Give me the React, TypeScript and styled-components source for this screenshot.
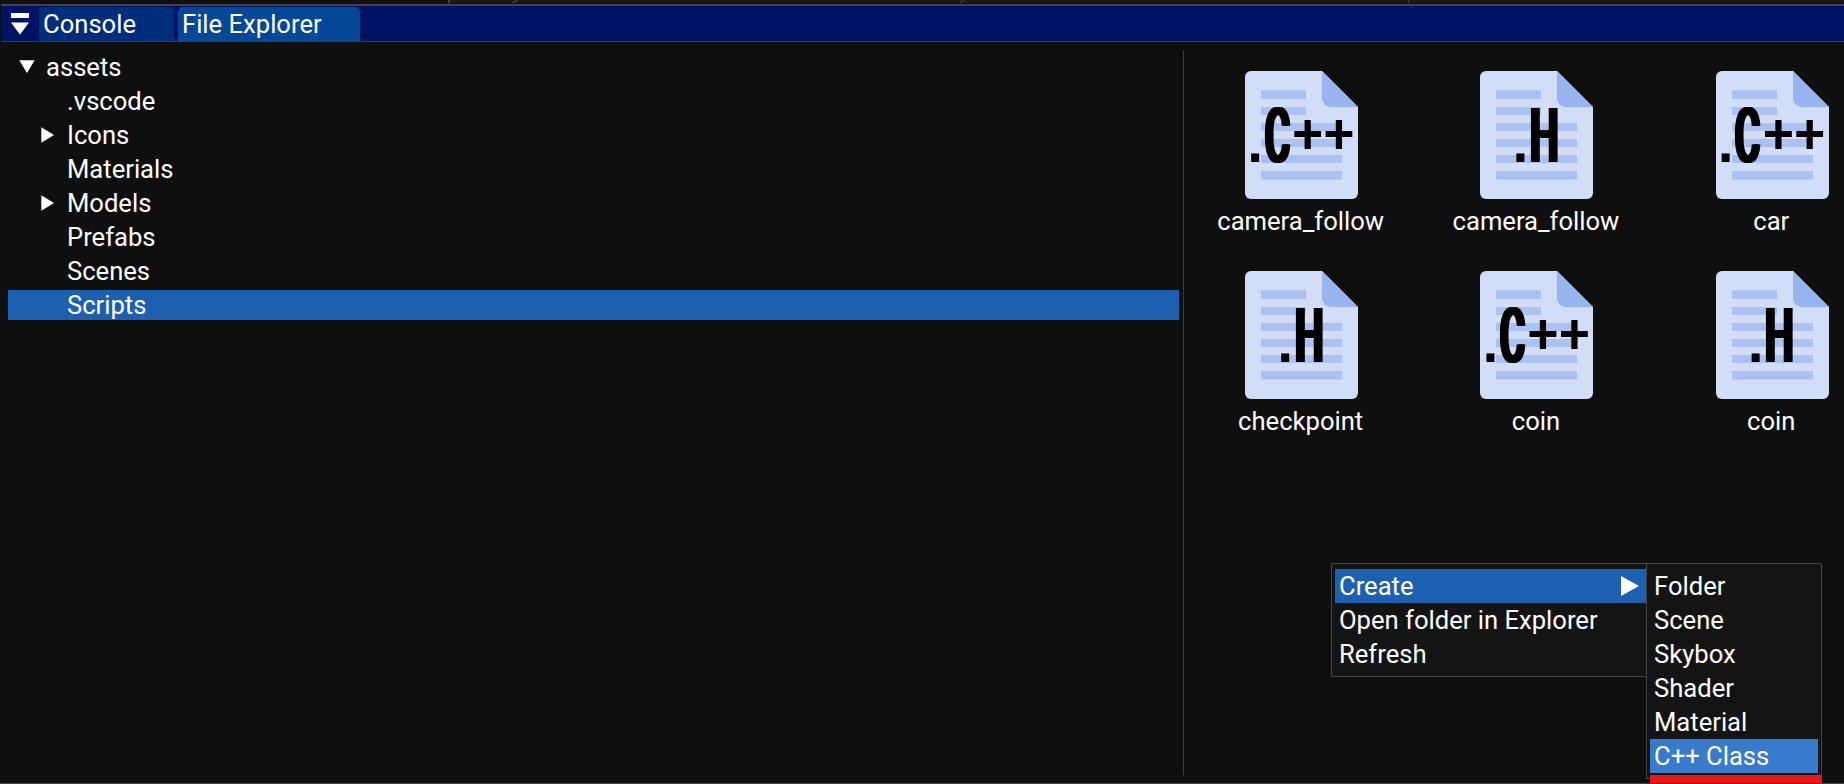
import React from "react";
import styled, { createGlobalStyle, css } from "styled-components";

const GlobalStyle = createGlobalStyle`
  html, body { margin: 0; padding: 0; background: #0f0f0f; overflow: hidden; }
  * { box-sizing: border-box; }
`;

const Window = styled.div`
  position: relative;
  display: flex;
  flex-direction: column;
  width: 1844px;
  height: 784px;
  overflow: hidden;
  background: #0f0f0f;
  color: #fff;
  font-family: Roboto, "Liberation Sans", sans-serif;
  font-size: 25.6px;
  line-height: 30px;
  white-space: nowrap;
`;

const UpperDock = styled.div`
  display: flex;
  height: 4px;
  padding-left: 448px;
`;

const UpperPanel = styled.div`
  flex: 1;
  height: 4px;
  border-left: 2px solid #424248;
  border-bottom: 1px solid #111;
  background: #1a1a1a;
`;

const UpperMarks = styled.svg`
  display: block;
  width: 1000px;
  height: 3px;
`;

const Splitter = styled.div`
  height: 2px;
  margin-left: 1px;
  background: #424248;
`;

const TabBar = styled.div`
  display: flex;
  align-items: flex-end;
  height: 36px;
  margin-left: 1px;
  padding-left: 10px;
  border-bottom: 1px solid #054a96;
  background: #001263;
`;

const DockMenuIcon = styled.svg`
  width: 18px;
  height: 35px;
  margin-right: 10px;
`;

const Tab = styled.div<{ $width: number; $active?: boolean }>`
  width: ${(p) => p.$width}px;
  height: 34px;
  margin-right: 4px;
  padding: 2px 0 0 4px;
  border-radius: 5px 5px 0 0;
  background: ${(p) => (p.$active ? "#054896" : "#002d7c")};
`;

const Body = styled.div`
  flex: 1;
  display: flex;
  padding: 8px 0 8px 8px;
  border-bottom: 1px solid #424248;
`;

const Tree = styled.div`
  display: flex;
  flex-direction: column;
  gap: 4px;
  width: 1171px;
  padding-top: 2px;
`;

const TreeRow = styled.div<{ $depth: number; $selected?: boolean }>`
  display: flex;
  align-items: center;
  height: 30px;
  padding-left: ${(p) => 11 + p.$depth * 21}px;
  ${(p) => p.$selected && css`background: #1e60b0;`}
`;

const TreeArrow = styled.svg`
  flex: none;
  width: 16px;
  height: 30px;
  margin-right: 11px;
`;

const Divider = styled.div`
  width: 1px;
  height: 725px;
  margin-left: 4px;
  background: #3d3d41;
`;

const FileGrid = styled.div`
  display: grid;
  grid-template-columns: repeat(3, 235.3px);
  grid-auto-rows: 200px;
  width: 660px;
  padding-top: 21px;
`;

const FileCell = styled.div`
  display: flex;
  flex-direction: column;
  align-items: center;
`;

const FileIcon = styled.div`
  position: relative;
  width: 113px;
  height: 128px;
`;

const FileLabel = styled.div`
  margin-top: 7px;
  padding-right: 2px;
`;

const Badge = styled.div<{ $indent: number }>`
  position: absolute;
  inset: 0;
  display: flex;
  align-items: flex-start;
  padding-left: ${(p) => p.$indent}px;
  color: #000;
  line-height: 1;
  font-weight: 500;
`;

const Dot = styled.span`
  flex: none;
  width: 17.6px;
  padding-top: 42.8px;
  font-family: "Liberation Sans", sans-serif;
  font-size: 57px;
  font-weight: 700;
`;

const Letter = styled.span<{ $stretch: number }>`
  flex: none;
  width: 27.8px;
  padding-top: 27px;
  font-size: 76px;
  transform: scaleX(${(p) => p.$stretch});
  transform-origin: 0 0;
  text-shadow: 4px 0 0 #000, -4px 0 0 #000, 2px 0 0 #000, -2px 0 0 #000;
`;

const Plus = styled.span`
  flex: none;
  width: 31.3px;
  padding-top: 36.2px;
  font-size: 55px;
`;

const Menu = styled.div<{ $x: number; $width: number; $height: number }>`
  position: absolute;
  left: ${(p) => p.$x}px;
  top: 563px;
  width: ${(p) => p.$width}px;
  height: ${(p) => p.$height}px;
  padding: 5px 3px 0;
  border: 1px solid #424248;
  background: #141414;
`;

const MenuItem = styled.div<{ $tone?: string }>`
  display: flex;
  align-items: center;
  justify-content: space-between;
  height: 34px;
  padding: 0 7px 0 4px;
  background: ${(p) => p.$tone || "transparent"};
`;

const SubmenuArrow = styled.svg`
  width: 18px;
  height: 20px;
`;

const DropMarker = styled.div`
  position: absolute;
  left: 1650px;
  top: 775px;
  width: 172px;
  height: 8px;
  background: #e51a1a;
`;

type Arrow = "open" | "closed" | "none";

const tree: { name: string; depth: number; arrow: Arrow; selected?: boolean }[] = [
  { name: "assets", depth: 0, arrow: "open" },
  { name: ".vscode", depth: 1, arrow: "none" },
  { name: "Icons", depth: 1, arrow: "closed" },
  { name: "Materials", depth: 1, arrow: "none" },
  { name: "Models", depth: 1, arrow: "closed" },
  { name: "Prefabs", depth: 1, arrow: "none" },
  { name: "Scenes", depth: 1, arrow: "none" },
  { name: "Scripts", depth: 1, arrow: "none", selected: true },
];

const files: { name: string; kind: "cpp" | "h" }[] = [
  { name: "camera_follow", kind: "cpp" },
  { name: "camera_follow", kind: "h" },
  { name: "car", kind: "cpp" },
  { name: "checkpoint", kind: "h" },
  { name: "coin", kind: "cpp" },
  { name: "coin", kind: "h" },
];

function FilePicture({ kind }: { kind: "cpp" | "h" }) {
  return (
    <FileIcon>
      <svg width="113" height="128" viewBox="0 0 113 128" display="block">
        <path d="M6 0H77L113 36V122a6 6 0 0 1-6 6H6a6 6 0 0 1-6-6V6a6 6 0 0 1 6-6Z" fill="#d2def8" />
        <path d="M77 0L113 36H86a9 9 0 0 1-9-9Z" fill="#98b4f0" />
        <path
          d="M16 19.3H61V28H16ZM16 36H61V44H16ZM16 52H97V60H16ZM16 68H97V76H16ZM16 84H97V92H16ZM16 100H97V108.5H16Z"
          fill="#abc1f1"
        />
      </svg>
      {kind === "cpp" ? (
        <Badge $indent={2}>
          <Dot>.</Dot>
          <Letter $stretch={0.5}>C</Letter>
          <Plus>+</Plus>
          <Plus>+</Plus>
        </Badge>
      ) : (
        <Badge $indent={32}>
          <Dot>.</Dot>
          <Letter $stretch={0.53}>H</Letter>
        </Badge>
      )}
    </FileIcon>
  );
}

export default function App() {
  return (
    <>
      <GlobalStyle />
      <Window>
        <UpperDock>
          <UpperPanel>
            <UpperMarks viewBox="0 0 1000 3" fill="none" stroke="#3a3a3a">
              <path d="M62 3L68 0M510 3L514 0" strokeWidth="1.5" />
              <path d="M958.5 0V3" />
            </UpperMarks>
          </UpperPanel>
        </UpperDock>
        <Splitter />
        <TabBar>
          <DockMenuIcon viewBox="0 0 18 35" fill="#fff">
            <path d="M0 7H18V12H0ZM0 16.5H18L9 28.5Z" />
          </DockMenuIcon>
          <Tab $width={135}>Console</Tab>
          <Tab $width={182} $active>File Explorer</Tab>
        </TabBar>
        <Body>
          <Tree>
            {tree.map((n) => (
              <TreeRow key={n.name} $depth={n.depth} $selected={n.selected}>
                <TreeArrow viewBox="0 0 16 30" fill="#fff">
                  {n.arrow === "open" && <path d="M0.3 8.3H15.7L8 21Z" />}
                  {n.arrow === "closed" && <path d="M1.3 7.3V22.7L14 15Z" />}
                </TreeArrow>
                {n.name}
              </TreeRow>
            ))}
          </Tree>
          <Divider />
          <FileGrid>
            {files.map((f, i) => (
              <FileCell key={i}>
                <FilePicture kind={f.kind} />
                <FileLabel>{f.name}</FileLabel>
              </FileCell>
            ))}
          </FileGrid>
        </Body>
        <Menu $x={1331} $width={319} $height={114}>
          <MenuItem $tone="#1e60b0">
            Create
            <SubmenuArrow viewBox="0 0 18 20" fill="#fff">
              <path d="M0 0L18 10L0 20Z" />
            </SubmenuArrow>
          </MenuItem>
          <MenuItem>Open folder in Explorer</MenuItem>
          <MenuItem>Refresh</MenuItem>
        </Menu>
        <Menu $x={1646} $width={176} $height={216}>
          <MenuItem>Folder</MenuItem>
          <MenuItem>Scene</MenuItem>
          <MenuItem>Skybox</MenuItem>
          <MenuItem>Shader</MenuItem>
          <MenuItem>Material</MenuItem>
          <MenuItem $tone="#387acb">C++ Class</MenuItem>
        </Menu>
        <DropMarker />
      </Window>
    </>
  );
}
